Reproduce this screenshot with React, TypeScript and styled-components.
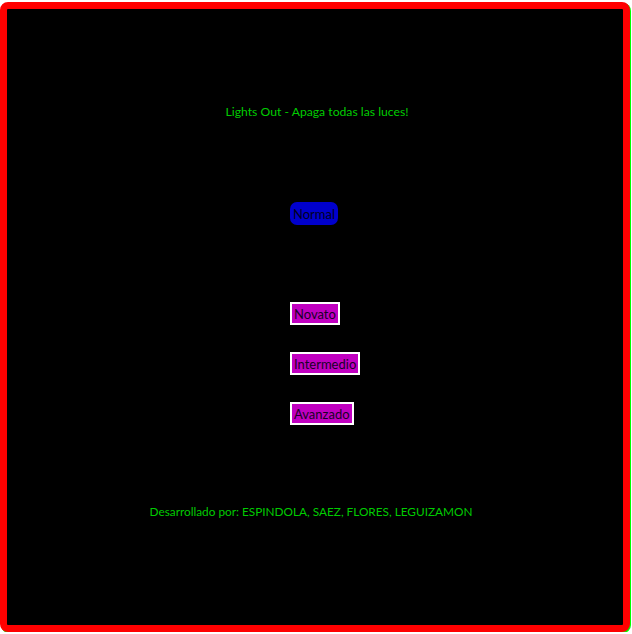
import React from "react";
import styled, { createGlobalStyle } from "styled-components";

const Global = createGlobalStyle`
  html, body { margin: 0; padding: 0; background: #ffffff; }
  body { font-family: Lato, "Noto Sans", sans-serif; }
`;

const Frame = styled.div`
  box-sizing: border-box;
  margin-top: 2px;
  width: 630px;
  height: 630px;
  border: 7px solid #ff0000;
  border-radius: 8px;
  background: #000000;
  box-shadow: 1px 1px 0 #00ff00;
  display: flex;
  flex-direction: column;
  align-items: center;
`;

const Title = styled.div`
  margin-top: 93px;
  padding-left: 4px;
  height: 20px;
  line-height: 20px;
  font-size: 12.2px;
  color: #00cc00;
`;

const Menu = styled.div<{ $gap: number; $top: number }>`
  width: 50px;
  margin-top: ${(p) => p.$top}px;
  display: flex;
  flex-direction: column;
  align-items: flex-start;
  gap: ${(p) => p.$gap}px;
`;

const ModeButton = styled.button`
  box-sizing: border-box;
  height: 23px;
  padding: 0 3px;
  border: none;
  border-radius: 7px;
  background: #0000cc;
  color: #000022;
  font-family: Lato, "Noto Sans", sans-serif;
  font-size: 13px;
  white-space: nowrap;
`;

const LevelButton = styled.button`
  box-sizing: border-box;
  height: 23px;
  padding: 0 2px;
  border: 2px solid #ffffff;
  border-radius: 0;
  background: #c000c0;
  color: #1a0028;
  font-family: Lato, "Noto Sans", sans-serif;
  font-size: 13px;
  white-space: nowrap;
`;

const Footer = styled.div`
  margin-top: 77px;
  padding-right: 8px;
  height: 20px;
  line-height: 20px;
  font-size: 11.8px;
  color: #00cc00;
`;

export default function App() {
  return (
    <>
      <Global />
      <Frame>
        <Title>Lights Out - Apaga todas las luces!</Title>
        <Menu $gap={0} $top={80}>
          <ModeButton>Normal</ModeButton>
        </Menu>
        <Menu $gap={27} $top={77}>
          <LevelButton>Novato</LevelButton>
          <LevelButton>Intermedio</LevelButton>
          <LevelButton>Avanzado</LevelButton>
        </Menu>
        <Footer>Desarrollado por: ESPINDOLA, SAEZ, FLORES, LEGUIZAMON</Footer>
      </Frame>
    </>
  );
}
